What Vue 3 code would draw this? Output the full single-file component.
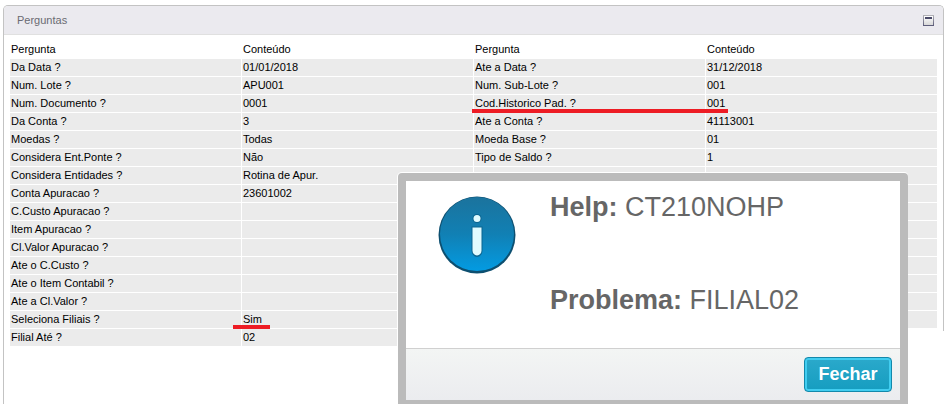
<script setup>
import { ref } from 'vue'

const collapsed = ref(false)
const dialogOpen = ref(true)

const rows = [
  ['Da Data ?', '01/01/2018', 'Ate a Data ?', '31/12/2018'],
  ['Num. Lote ?', 'APU001', 'Num. Sub-Lote ?', '001'],
  ['Num. Documento ?', '0001', 'Cod.Historico Pad. ?', '001'],
  ['Da Conta ?', '3', 'Ate a Conta ?', '41113001'],
  ['Moedas ?', 'Todas', 'Moeda Base ?', '01'],
  ['Considera Ent.Ponte ?', 'Não', 'Tipo de Saldo ?', '1'],
  ['Considera Entidades ?', 'Rotina de Apur.', '', ''],
  ['Conta Apuracao ?', '23601002', '', ''],
  ['C.Custo Apuracao ?', '', '', ''],
  ['Item Apuracao ?', '', '', ''],
  ['Cl.Valor Apuracao ?', '', '', ''],
  ['Ate o C.Custo ?', '', '', ''],
  ['Ate o Item Contabil ?', '', '', ''],
  ['Ate a Cl.Valor ?', '', '', ''],
  ['Seleciona Filiais ?', 'Sim', '', ''],
  ['Filial Até ?', '02'],
]

function markFor(cell) {
  if (cell === 'Cod.Historico Pad. ?') return 'mark mark-wide'
  if (cell === 'Sim') return 'mark'
  return ''
}
</script>

<template>
  <div class="page">
    <section class="panel">
      <header class="panel-header">
        <span>Perguntas</span>
        <button class="collapse" aria-label="Minimizar" @click="collapsed = !collapsed">
          <svg width="11" height="11" viewBox="0 0 11 11" shape-rendering="crispEdges">
            <defs>
              <linearGradient id="frame" x1="0" y1="0" x2="0" y2="1">
                <stop offset="0" stop-color="#b4b4b8" />
                <stop offset="1" stop-color="#5a5a78" />
              </linearGradient>
              <linearGradient id="face" x1="0" y1="0" x2="0" y2="1">
                <stop offset="0" stop-color="#ffffff" />
                <stop offset="1" stop-color="#d8d8d8" />
              </linearGradient>
            </defs>
            <rect width="11" height="11" fill="url(#frame)" />
            <rect x="1" y="1" width="9" height="9" fill="url(#face)" />
            <rect x="2" y="2" width="7" height="2" fill="#4a4a68" />
          </svg>
        </button>
      </header>

      <table v-show="!collapsed">
        <thead>
          <tr>
            <th>Pergunta</th>
            <th>Conteúdo</th>
            <th>Pergunta</th>
            <th>Conteúdo</th>
          </tr>
        </thead>
        <tbody>
          <tr v-for="row in rows" :key="row[0]">
            <td v-for="(cell, i) in row" :key="i" :class="markFor(cell)">{{ cell }}</td>
          </tr>
        </tbody>
      </table>
    </section>

    <div v-if="dialogOpen" class="dialog" role="dialog">
      <div class="dialog-body">
        <svg class="info" width="78" height="78" viewBox="0 0 78 78">
          <defs>
            <linearGradient id="disc" x1="0" y1="0" x2="0" y2="1">
              <stop offset="0" stop-color="#1b739d" />
              <stop offset="0.5" stop-color="#1180b4" />
              <stop offset="1" stop-color="#039be2" />
            </linearGradient>
          </defs>
          <circle cx="39" cy="39" r="38.5" fill="#0d4f70" />
          <circle cx="39" cy="38" r="37" fill="url(#disc)" />
          <circle cx="39" cy="22.5" r="4.5" fill="#0b6590" />
          <path d="M33.5 30.5h11v24a5.5 6.5 0 0 1-11 0z" fill="#0b6590" />
          <circle cx="39" cy="22.5" r="3.5" fill="#e0fbff" />
          <path d="M34.5 31.5h9v23a4.5 5 0 0 1-9 0z" fill="#e0fbff" />
        </svg>
        <div class="message">
          <p><b>Help:</b> CT210NOHP</p>
          <p><b>Problema:</b> FILIAL02</p>
        </div>
      </div>
      <footer class="dialog-footer">
        <button class="close" @click="dialogOpen = false">Fechar</button>
      </footer>
    </div>
  </div>
</template>

<style>
body {
  background: #fff;
  overflow: hidden;
}
</style>

<style scoped>
.page {
  position: relative;
  display: flex;
  min-height: 100vh;
  box-sizing: border-box;
  padding: 5px 6px 0 3px;
  font-family: "Liberation Sans", Arial, sans-serif;
  overflow: hidden;
}

.panel {
  position: relative;
  flex: 1;
  border: 1px solid #c3c3c3;
  border-bottom: none;
  border-radius: 5px 5px 0 0;
}

/* the frame stays open beside the last row */
.panel::after {
  content: "";
  position: absolute;
  top: 325px;
  right: -1px;
  bottom: 0;
  width: 1px;
  background: #fff;
}

.panel-header {
  display: flex;
  align-items: center;
  justify-content: space-between;
  height: 28px;
  padding: 0 9px 0 13px;
  border-bottom: 1px solid #e0e0e0;
  border-radius: 4px 4px 0 0;
  background: #ebeaef;
  color: #6a6a72;
  font-size: 11px;
}

.collapse {
  display: flex;
  padding: 0;
  border: none;
  background: none;
  cursor: pointer;
}

table {
  width: calc(100% - 10px);
  margin: 5px 5px 0;
  border-spacing: 1px;
  table-layout: fixed;
  color: #000;
  font-size: 11px;
  line-height: 17px;
}

th,
td {
  height: 17px;
  padding: 0 1px;
  font-weight: normal;
  text-align: left;
}

td {
  background: #ebebeb;
}

.mark {
  position: relative;
  z-index: 1;

  &::after {
    content: "";
    position: absolute;
    left: -9px;
    bottom: -1px;
    width: 37px;
    height: 4px;
    background: #ed1c24;
  }

  &.mark-wide::after {
    left: -2px;
    width: calc(100% + 25px);
  }
}

.dialog {
  position: absolute;
  z-index: 2;
  top: 173px;
  right: 42px;
  width: 510px;
  box-sizing: border-box;
  border: 8px solid #bbb;
  border-radius: 4px;
  background: #fff;
  box-shadow: 0 -1px 0 #fff, -1px 0 0 #fff;
}

.dialog-body {
  display: flex;
  gap: 34px;
  padding: 10px 32px 32px;
}

.info {
  flex: none;
  margin-top: 5px;
}

.message {
  display: flex;
  flex-direction: column;
  gap: 61px;
  color: #666;
  font-size: 27px;
  line-height: 32px;

  p {
    margin: 0;
  }
}

.dialog-footer {
  display: flex;
  align-items: center;
  justify-content: flex-end;
  padding: 8px;
  border-top: 1px solid #d0d0d0;
  background: linear-gradient(#f3f5f4, #ebecef);
}

.close {
  width: 88px;
  height: 35px;
  padding: 0;
  border: 1px solid #1389ab;
  border-radius: 4px;
  background: linear-gradient(#2ba9cb, #159dc0);
  box-shadow: inset 0 0 0 2px #41cdf0;
  color: #fff;
  font: bold 18px "Liberation Sans", Arial, sans-serif;
  cursor: pointer;
}
</style>
